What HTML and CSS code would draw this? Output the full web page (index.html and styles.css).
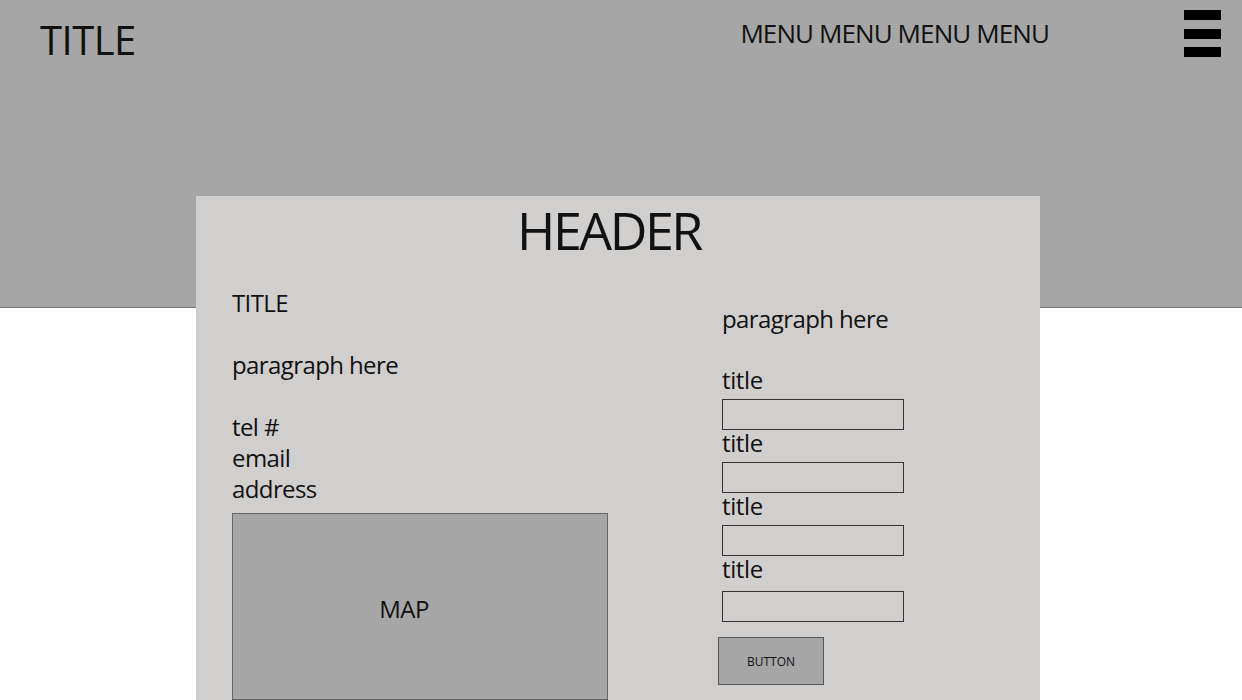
FILE: index.html
```html
<!DOCTYPE html>
<html lang="en">
<head>
    <meta charset="UTF-8">
    <meta name="viewport" content="width=device-width, initial-scale=1.0">
    <title>Contact</title>
    <link rel="stylesheet" href="styles.css">
</head>
<body>
    <header class="hero">
        <div class="topbar">
            <div class="brand">TITLE</div>
            <nav class="menu">MENU MENU MENU MENU</nav>
            <div class="burger">
                <span></span>
                <span></span>
                <span></span>
            </div>
        </div>
    </header>

    <main class="card">
        <h1>HEADER</h1>
        <div class="columns">
            <div class="info">
                <p class="gap">TITLE</p>
                <p class="gap">paragraph here</p>
                <p>tel #</p>
                <p>email</p>
                <p>address</p>
                <div class="map">MAP</div>
            </div>
            <form class="contact">
                <p class="intro">paragraph here</p>
                <div class="field">
                    <label>title</label>
                    <input type="text" class="box">
                </div>
                <div class="field">
                    <label>title</label>
                    <input type="text" class="box">
                </div>
                <div class="field">
                    <label>title</label>
                    <input type="text" class="box">
                </div>
                <div class="field last">
                    <label>title</label>
                    <input type="text" class="box">
                </div>
                <button type="button" class="button">BUTTON</button>
            </form>
        </div>
    </main>
</body>
</html>
```

FILE: styles.css
```css
body {
    margin: 0;
    padding: 0;
    font-family: "Open Sans", "Noto Sans", sans-serif;
    color: #111;
    background: #fff;
}
.hero {
    height: 308px;
    background: #a6a6a6;
    border-bottom: 1px solid #777;
    box-sizing: border-box;
}
.topbar {
    display: flex;
    align-items: flex-start;
    padding: 10px 21px 0 40px;
}
.brand {
    font-size: 40px;
    line-height: 40px;
    margin-top: 10px;
    letter-spacing: -0.5px;
}
.menu {
    margin-left: auto;
    margin-top: 10px;
    font-size: 26px;
    line-height: 26px;
    letter-spacing: -0.9px;
}
.burger {
    display: flex;
    flex-direction: column;
    gap: 8.5px;
    margin-left: 135px;
}
.burger span {
    display: block;
    width: 37px;
    height: 10px;
    background: #000;
}
.card {
    position: relative;
    width: 844px;
    margin: -112px 0 0 196px;
    background: #d0cfce;
    padding-top: 8px;
    min-height: 520px;
}
h1 {
    margin: 0 18px 0 0;
    font-size: 52px;
    line-height: 52px;
    font-weight: normal;
    text-align: center;
    letter-spacing: -2.5px;
}
.columns {
    display: grid;
    grid-template-columns: 490px 1fr;
    padding: 31px 0 0 36px;
}
p {
    margin: 0;
    font-size: 24px;
    line-height: 31px;
    letter-spacing: -0.6px;
}
.gap {
    margin-bottom: 31px;
}
.map {
    width: 376px;
    height: 187px;
    margin-top: 9px;
    box-sizing: border-box;
    background: #a6a6a6;
    border: 1px solid #666;
    display: flex;
    align-items: center;
    justify-content: center;
    font-size: 24px;
    letter-spacing: -0.5px;
    padding-right: 32px;
    padding-top: 4px;
}
.contact {
    padding-top: 16px;
}
.intro {
    margin-bottom: 34px;
}
.field {
    margin-bottom: 1px;
}
.field.last .box {
    margin-top: 10px;
}
label {
    display: block;
    font-size: 24px;
    line-height: 24px;
    letter-spacing: -0.4px;
}
.box {
    display: block;
    width: 182px;
    height: 31px;
    margin-top: 7px;
    box-sizing: border-box;
    background: transparent;
    border: 1.5px solid #333;
    border-radius: 0;
    padding: 0;
}
.button {
    display: block;
    width: 106px;
    height: 48px;
    margin: 15px 0 0 -4px;
    background: #a6a6a6;
    border: 1px solid #555;
    border-radius: 0;
    font-family: "Open Sans", sans-serif;
    font-size: 12px;
    color: #111;
    padding: 0;
}
```
